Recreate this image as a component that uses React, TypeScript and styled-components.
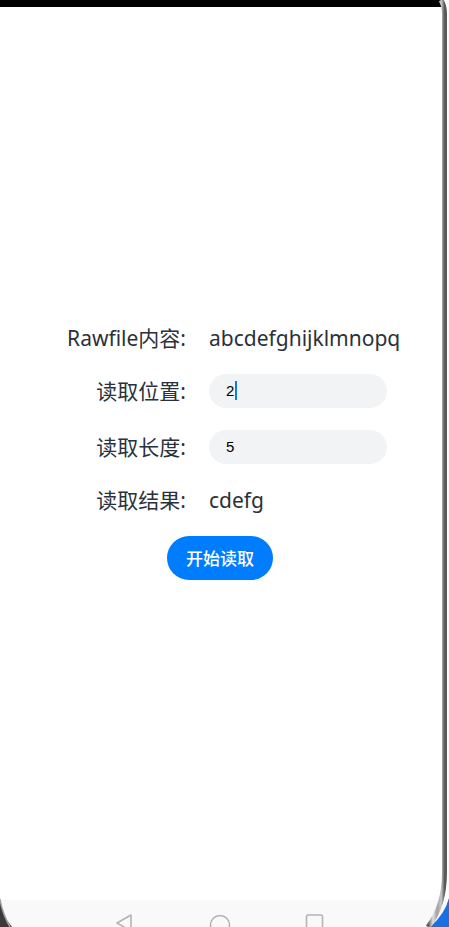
import React from "react";
import styled, { createGlobalStyle } from "styled-components";

const Global = createGlobalStyle`
  html, body { margin: 0; padding: 0; background: #ffffff; }
  body { font-family: "Noto Sans", "Noto Sans CJK SC", sans-serif; }
`;

const Device = styled.div`
  position: relative;
  width: 449px;
  height: 927px;
  overflow: hidden;
  background: #ffffff;
  display: flex;
  flex-direction: column;
`;

const StatusBar = styled.div`
  height: 7px;
  width: 442px;
  background: #000000;
  flex: none;
`;

const Screen = styled.main`
  flex: 1;
  display: flex;
  flex-direction: column;
  justify-content: center;
  align-items: stretch;
  gap: 22px;
  padding-top: 0;
  padding-bottom: 4px;
`;

const Row = styled.div`
  display: grid;
  grid-template-columns: 186px auto;
  column-gap: 23px;
  align-items: center;
`;

const Label = styled.span`
  text-align: right;
  font-size: 21px;
  line-height: 28px;
  color: #2b313a;
  white-space: nowrap;
`;

const Value = styled.span`
  font-size: 21px;
  line-height: 28px;
  color: #2b313a;
  white-space: nowrap;
`;

const Field = styled.div`
  width: 178px;
  height: 34px;
  box-sizing: border-box;
  border-radius: 17px;
  background: #f1f3f5;
  display: flex;
  align-items: center;
  padding-left: 17px;
  font-family: "Liberation Sans", sans-serif;
  font-size: 15px;
  color: #000000;
`;

const Caret = styled.span`
  display: inline-block;
  width: 2px;
  height: 19px;
  margin-left: 1px;
  background: #0a7cf0;
`;

const ButtonRow = styled.div`
  display: flex;
  justify-content: center;
  padding-right: 9px;
`;

const Button = styled.button`
  width: 106px;
  height: 44px;
  border: none;
  border-radius: 22px;
  background: #007dff;
  color: #ffffff;
  font-family: "Noto Sans CJK SC", sans-serif;
  font-size: 17px;
  font-weight: 500;
  padding: 0;
`;

const NavBar = styled.nav`
  flex: none;
  height: 27px;
  background: #f9f9f9;
  display: flex;
  align-items: flex-start;
  justify-content: center;
  padding-top: 14px;
  padding-right: 9px;
  box-sizing: border-box;
`;

const NavSlot = styled.div`
  width: 95px;
  display: flex;
  justify-content: center;
`;

const Bezel = styled.svg`
  position: absolute;
  inset: 0;
  pointer-events: none;
`;

export default function App() {
  return (
    <>
      <Global />
      <Device>
        <StatusBar />
        <Screen>
          <Row>
            <Label>Rawfile内容:</Label>
            <Value>abcdefghijklmnopq</Value>
          </Row>
          <Row>
            <Label>读取位置:</Label>
            <Field>
              2<Caret />
            </Field>
          </Row>
          <Row>
            <Label>读取长度:</Label>
            <Field>5</Field>
          </Row>
          <Row>
            <Label>读取结果:</Label>
            <Value>cdefg</Value>
          </Row>
          <ButtonRow>
            <Button>开始读取</Button>
          </ButtonRow>
        </Screen>
        <NavBar>
          <NavSlot>
            <svg width="20" height="20" viewBox="0 0 20 20">
              <path d="M16 1 L2 9 L16 17 Z" fill="none" stroke="#b4b4b4" strokeWidth="1.6" strokeLinejoin="round" />
            </svg>
          </NavSlot>
          <NavSlot>
            <svg width="22" height="22" viewBox="0 0 22 22">
              <circle cx="11" cy="11" r="9.5" fill="none" stroke="#b4b4b4" strokeWidth="1.6" />
            </svg>
          </NavSlot>
          <NavSlot>
            <svg width="20" height="20" viewBox="0 0 20 20">
              <rect x="1.5" y="1" width="16" height="17" rx="1.5" fill="none" stroke="#b4b4b4" strokeWidth="1.6" />
            </svg>
          </NavSlot>
        </NavBar>
        <Bezel width="449" height="927" viewBox="0 0 449 927">
          <defs>
            <linearGradient id="rim" x1="0" y1="0" x2="1" y2="0">
              <stop offset="0" stopColor="#555555" />
              <stop offset="0.3" stopColor="#e0e0e0" />
              <stop offset="0.55" stopColor="#a0a0a0" />
              <stop offset="0.8" stopColor="#c8c8c8" />
              <stop offset="1" stopColor="#5a5a5a" />
            </linearGradient>
          </defs>
          <path d="M449 898 L449 927 L430 927 Q445 914 449 898 Z" fill="#1c6fe0" />
          <path
            d="M441 0 Q444.5 6 444.5 14 L444.5 872 Q444.5 906 428 927"
            fill="none"
            stroke="url(#rim)"
            strokeWidth="5"
          />
          <path d="M0 898 Q2 916 12 927 L0 927 Z" fill="#3a3a3a" />
          <path d="M0 900 Q3 915 10 927" fill="none" stroke="#a0a0a0" strokeWidth="1.5" />
        </Bezel>
      </Device>
    </>
  );
}
